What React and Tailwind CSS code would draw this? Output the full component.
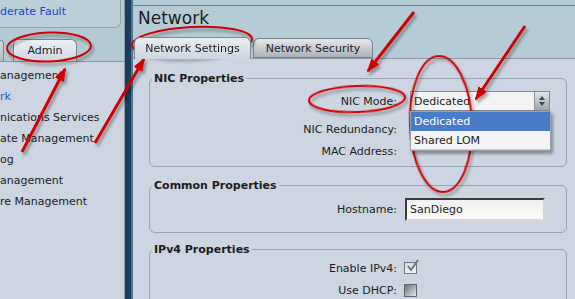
import React from 'react';

const navItems = [
  { label: 'anagement' },
  { label: 'rk', link: true },
  { label: 'nications Services' },
  { label: 'ate Management' },
  { label: 'og' },
  { label: 'anagement' },
  { label: 're Management' },
];

// Red call-outs drawn over the screenshot
const Annotations = () => (
  <svg className="absolute inset-0 pointer-events-none" width="575" height="299" viewBox="0 0 575 299">
    <defs>
      <filter id="sh" x="-20%" y="-20%" width="140%" height="140%">
        <feDropShadow dx="2" dy="3" stdDeviation="1.6" floodColor="#000" floodOpacity="0.35" />
      </filter>
      <marker id="ah" viewBox="0 0 14 10" refX="12" refY="5" markerWidth="14" markerHeight="10" markerUnits="userSpaceOnUse" orient="auto">
        <path d="M0,0 L14,5 L0,10 z" fill="#d10000" />
      </marker>
    </defs>
    <g filter="url(#sh)" fill="none" stroke="#d10000">
      <ellipse cx="49" cy="47" rx="42" ry="14.5" strokeWidth="2" transform="rotate(-2 49 47)" />
      <ellipse cx="192" cy="42" rx="60" ry="15" strokeWidth="2" transform="rotate(-3 192 42)" />
      <ellipse cx="357" cy="99" rx="48" ry="13" strokeWidth="2" transform="rotate(-2 357 99)" />
      <ellipse cx="441" cy="124" rx="31" ry="68" strokeWidth="2" transform="rotate(-2 441 124)" />
      <line x1="22" y1="152" x2="65" y2="69" strokeWidth="3" markerEnd="url(#ah)" />
      <line x1="95" y1="143" x2="144" y2="59" strokeWidth="3" markerEnd="url(#ah)" />
      <line x1="414" y1="12" x2="368" y2="71" strokeWidth="3" markerEnd="url(#ah)" />
      <line x1="525" y1="26" x2="476" y2="99" strokeWidth="3" markerEnd="url(#ah)" />
    </g>
  </svg>
);

const Row = ({ label, children, className = '' }) => (
  <div className={`flex items-center ${className}`}>
    <span className="w-[247px] text-right shrink-0">{label}</span>
    {children}
  </div>
);

const App = () => {
  return (
    <div
      className="relative w-[575px] h-[299px] overflow-hidden flex text-[11px] leading-[13px] text-[#1c1c1c] bg-[#ccd5e1]"
      style={{ fontFamily: '"DejaVu Sans", Verdana, sans-serif' }}
    >
      {/* Left nav panel */}
      <aside className="w-[125px] shrink-0 flex flex-col bg-[#b3c9d3] border-r border-[#8c9ba6]">
        <div className="h-[28px] w-[121px] shrink-0 bg-[#bbd0d9] border-b border-r border-[#8fa6b1] rounded-br-[6px] pt-[5px] text-[#2340c8] whitespace-nowrap">
          derate Fault
        </div>
        <div className="h-[33px] shrink-0 flex items-end">
          <div className="w-[4px] h-[21px] bg-gradient-to-b from-[#d6dbe1] to-[#b3bac3] border-r border-t border-[#7e8790] rounded-tr-[4px]" />
          <div className="ml-[9px] w-[64px] h-[23px] -mb-px bg-gradient-to-b from-[#eef1f4] to-[#cdd5e1] border border-b-0 border-[#7e8790] rounded-t-[6px] flex items-center justify-center pb-[2px]">
            Admin
          </div>
        </div>
        <nav className="flex-1 bg-[#ccd5e1] border-t border-[#8c9ba6] pt-[3px]">
          {navItems.map((item, i) => (
            <div key={i} className={`h-[21px] flex items-center whitespace-nowrap ${item.link ? 'text-[#2a52d6]' : ''}`}>
              {item.label}
            </div>
          ))}
        </nav>
      </aside>

      {/* Divider */}
      <div className="w-[8px] shrink-0 bg-[#183e5c] border-r-2 border-[#4d7690]" />

      {/* Main panel */}
      <main className="flex-1 flex flex-col min-h-0">
        <div className="h-[6px] shrink-0 bg-[#b2cad4] border-b border-[#5e889c]" />
        <header className="h-[52px] shrink-0 bg-[#b5cbd5] flex flex-col">
          <h1 className="text-[17px] leading-[20px] pl-[5px] pt-[2px]">Network</h1>
          <div className="flex-1 flex items-end">
            <div className="ml-[1px] w-[117px] h-[22px] -mb-px z-10 bg-gradient-to-b from-[#e9edf1] to-[#ccd5e1] border border-b-0 border-[#7e8790] rounded-t-[6px] flex items-center justify-center">
              Network Settings
            </div>
            <div className="ml-[2px] w-[120px] h-[20px] bg-gradient-to-b from-[#e6e9ec] to-[#abb1b9] border border-[#7a818a] rounded-t-[6px] flex items-center justify-center">
              Network Security
            </div>
          </div>
        </header>

        <section className="flex-1 min-h-0 border-t border-[#8c98a4] pl-[16px] pr-[8px]">
          <fieldset className="mt-[13px] border border-[#99a6b5] rounded-[6px] pt-[6px] pb-[5px]">
            <legend className="ml-[2px] px-[2px] font-bold">NIC Properties</legend>
            <Row label="NIC Mode:" className="h-[20px]">
              <div className="relative ml-[13px] w-[140px] h-[20px] bg-[#f3f3f3] border border-[#7f8891] flex">
                <span className="flex-1 pl-[3px] flex items-center">Dedicated</span>
                <span className="w-[15px] border-l border-[#8a929a] bg-gradient-to-b from-[#e4e7ea] to-[#9ea5ad] flex flex-col items-center justify-center gap-[2px]">
                  <svg width="6" height="4" viewBox="0 0 6 4"><path d="M3 0 L6 4 L0 4z" fill="#3d4650" /></svg>
                  <svg width="6" height="4" viewBox="0 0 6 4"><path d="M0 0 L6 0 L3 4z" fill="#3d4650" /></svg>
                </span>
                <div className="absolute left-[-1px] top-[19px] w-[141px] z-20 bg-[#f3f3f3] border border-[#9aa2ab] shadow-[2px_3px_3px_rgba(0,0,0,0.35)]">
                  <div className="h-[19px] bg-[#4a7bc9] text-white pl-[3px] flex items-center">Dedicated</div>
                  <div className="h-[19px] bg-[#f3f3f3] pl-[3px] flex items-center border-b border-[#c4cad1]">Shared LOM</div>
                </div>
              </div>
            </Row>
            <Row label="NIC Redundancy:" className="h-[20px] mt-[8px]" />
            <Row label="MAC Address:" className="h-[20px] mt-[2px]" />
          </fieldset>

          <fieldset className="mt-[12px] border border-[#99a6b5] rounded-[6px] pt-[6px] pb-[11px]">
            <legend className="ml-[2px] px-[2px] font-bold">Common Properties</legend>
            <Row label="Hostname:" className="h-[23px]">
              <div className="ml-[8px] w-[140px] h-[23px] bg-gradient-to-b from-[#f0f0f0] to-[#fbfbfb] border-2 border-t-[#3c3c3c] border-l-[#3c3c3c] border-r-[#d8d8d8] border-b-[#d8d8d8] pl-[3px] flex items-center">
                SanDiego
              </div>
            </Row>
          </fieldset>

          <fieldset className="mt-[10px] border border-[#99a6b5] rounded-[6px] pt-[2px] pb-[8px]">
            <legend className="ml-[2px] px-[2px] font-bold">IPv4 Properties</legend>
            <Row label="Enable IPv4:" className="h-[20px]">
              <div className="relative ml-[7px] w-[13px] h-[12px] bg-gradient-to-b from-[#d8dce0] to-[#f2f3f4] border border-[#707880]">
                <svg className="absolute left-[1px] top-[-4px]" width="13" height="13" viewBox="0 0 13 13">
                  <path d="M2 7 L5 11 L12 1" fill="none" stroke="#6a727a" strokeWidth="1.8" />
                </svg>
              </div>
            </Row>
            <Row label="Use DHCP:" className="h-[20px] mt-[2px]">
              <div className="ml-[7px] w-[13px] h-[13px] bg-gradient-to-br from-[#6f767d] to-[#e3e6e9] border border-[#5f666d]" />
            </Row>
          </fieldset>
        </section>
      </main>

      <Annotations />
    </div>
  );
};

export default App;
